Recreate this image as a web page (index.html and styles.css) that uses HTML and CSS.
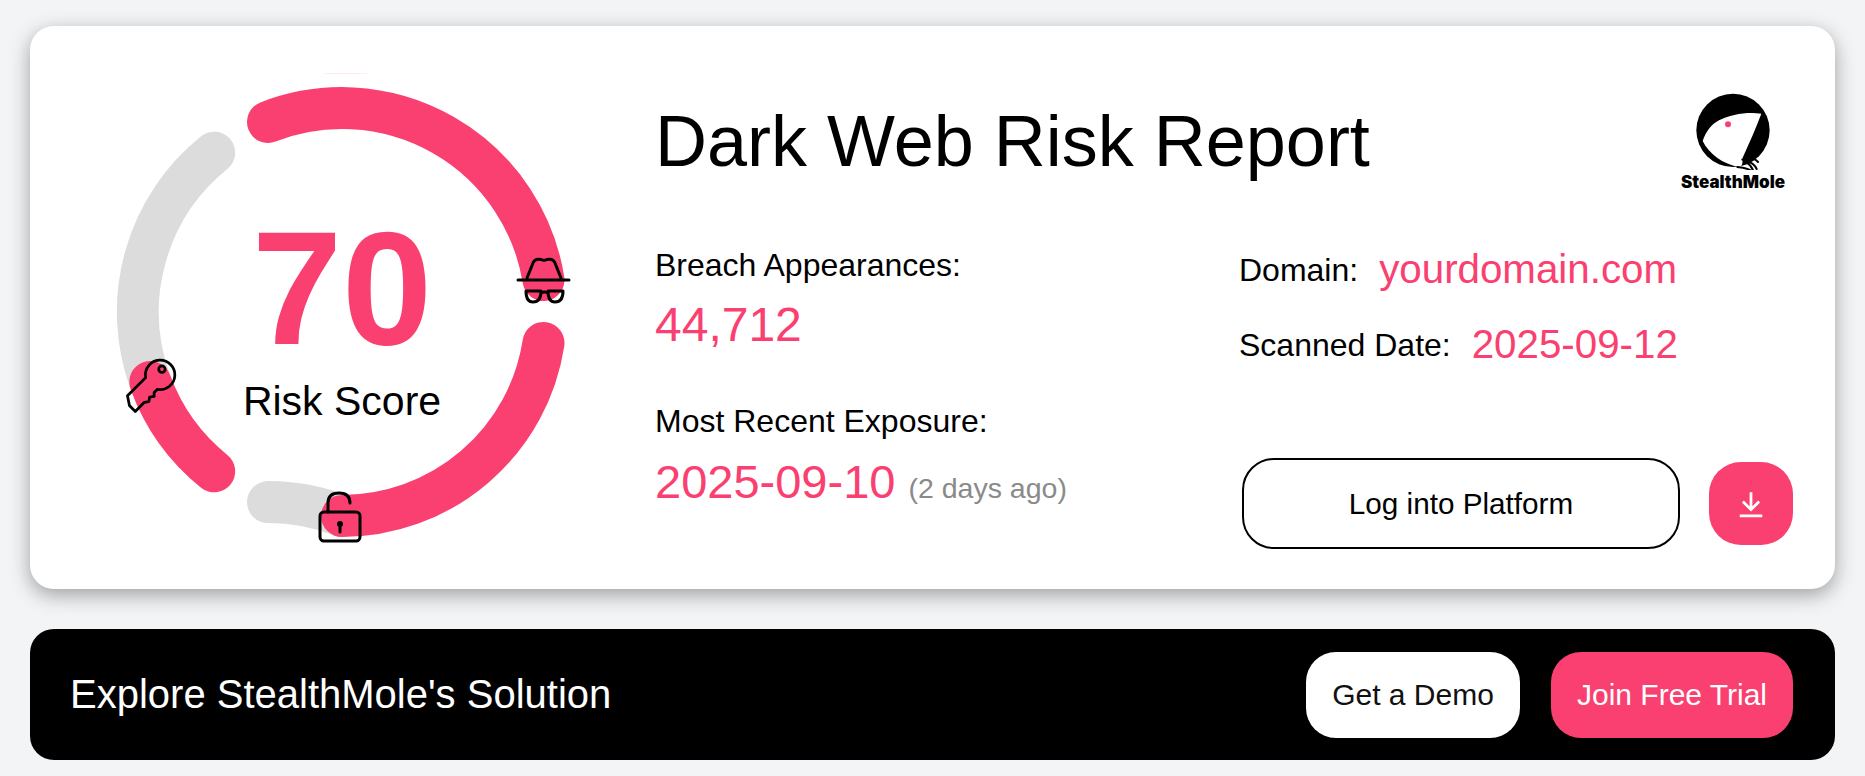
FILE: index.html
```html
<!DOCTYPE html>
<html lang="en">
<head>
<meta charset="utf-8">
<title>Dark Web Risk Report</title>
<link rel="stylesheet" href="styles.css">
</head>
<body>
<main class="page">
  <section class="card">
    <div class="gauge">
      <svg class="gauge-svg" viewBox="107 77 470 470" width="470" height="470" aria-hidden="true">
        <path class="arc-glint" d="M325 73.500H367"/>
        <g fill="none" stroke-width="42" stroke-linecap="round">
          <path class="arc-grey" d="M268 502.100A204 204 0 0 1 342 516"/>
          <path class="arc-grey" d="M214.200 152.700A204 204 0 0 0 150.300 382"/>
          <path class="arc-pink" d="M268 122A204 204 0 0 1 543.500 280"/>
          <path class="arc-pink" d="M543.500 343A204 204 0 0 1 342 516"/>
          <path class="arc-pink" d="M150.300 382A204 204 0 0 0 214.200 471.300"/>
        </g>
        <g class="icon-line">
          <path d="M518 280H569"/>
          <path d="M527 278L533 263Q535 258 541 259.500Q544 261 547 259.500Q553 258 555 263L561 278"/>
          <path d="M526 291H541Q541 302 533 302Q526 302 526 291ZM548 291H563Q563 302 555 302Q548 302 548 291ZM541 293Q544.500 291 548 293"/>
        </g>
        <g class="icon-line" transform="translate(160 375) rotate(-45) scale(0.92)">
          <path d="M-13 -9A16 16 0 1 1 -13 9L-18 9L-21 12L-25 9L-29 12L-33 9L-38 9L-47 9L-47 0L-41 -9Z"/>
          <circle cx="6" cy="-3" r="3.500"/>
        </g>
        <g class="icon-line">
          <rect x="320" y="512" width="40" height="29" rx="4"/>
          <path d="M328 512V503Q328 493 339 493Q350 493 350 503"/>
          <path d="M340 526V532"/>
          <circle class="icon-solid" cx="340" cy="524" r="3"/>
        </g>
      </svg>
      <div class="gauge-text">
        <div class="score">70</div>
        <div class="score-label">Risk Score</div>
      </div>
    </div>
    <div class="details">
      <header class="details-head">
        <h1 class="title">Dark Web Risk Report</h1>
        <div class="logo">
          <svg class="logo-mark" viewBox="160 65 234 234" width="78" height="78" aria-hidden="true">
            <circle cx="277" cy="180" r="110" class="logo-disc"/>
            <path class="logo-mole" d="M362 130C320 124 270 132 235 150C212 162 196 184 186 212C205 250 245 282 298 290C308 284 305 270 306 262C325 220 345 175 362 130Z"/>
            <circle class="logo-eye" cx="262" cy="162" r="9"/>
            <path class="logo-claw" d="M305 268Q335 255 352 275M318 272Q340 278 348 296M318 276Q332 285 338 302M290 290Q315 292 330 300"/>
          </svg>
          <span class="logo-name">StealthMole</span>
        </div>
      </header>
      <div class="details-body">
        <div class="stats">
          <div class="stat">
            <div class="label">Breach Appearances:</div>
            <div class="value">44,712</div>
          </div>
          <div class="stat">
            <div class="label">Most Recent Exposure:</div>
            <div class="value value-date">2025-09-10 <span class="note">(2 days ago)</span></div>
          </div>
        </div>
        <div class="side">
          <div class="meta">
            <div class="meta-row"><span class="label">Domain:</span><span class="meta-value">yourdomain.com</span></div>
            <div class="meta-row"><span class="label">Scanned Date:</span><span class="meta-value">2025-09-12</span></div>
          </div>
          <div class="actions">
            <button class="btn-outline" type="button">Log into Platform</button>
            <button class="btn-icon" type="button" aria-label="Download">
              <svg viewBox="0 0 24 24" width="30" height="30" aria-hidden="true">
                <path d="M12 2.500V16M5.500 10L12 16.500L18.500 10M3 21.500H21"/>
              </svg>
            </button>
          </div>
        </div>
      </div>
    </div>
  </section>
  <section class="cta">
    <div class="cta-text">Explore StealthMole's Solution</div>
    <div class="cta-actions">
      <button class="btn-white" type="button">Get a Demo</button>
      <button class="btn-pink" type="button">Join Free Trial</button>
    </div>
  </section>
</main>
</body>
</html>
```

FILE: styles.css
```css
* { box-sizing: border-box; }
html, body { margin: 0; height: 100%; }
body {
  background: #f3f4f6;
  font-family: "Liberation Sans", Arial, sans-serif;
  color: #000;
  overflow: hidden;
}
.page {
  display: flex;
  flex-direction: column;
  gap: 40px;
  padding: 26px 30px 16px;
}
.card {
  display: flex;
  height: 563px;
  padding: 51px 42px 40px 77px;
  background: #fff;
  border-radius: 24px;
  box-shadow: 0 6px 20px rgba(0, 0, 0, 0.35);
}
.gauge {
  display: grid;
  flex: none;
  width: 470px;
  height: 470px;
  margin-right: 78px;
}
.gauge-svg, .gauge-text { grid-area: 1 / 1; }
.gauge-svg { overflow: visible; }
.arc-glint { fill: none; stroke: #f94070; stroke-width: 1; opacity: 0.1; }
.arc-grey { stroke: #dcdcdc; }
.arc-pink { stroke: #f94070; }
.icon-line {
  fill: none;
  stroke: #000;
  stroke-width: 3;
  stroke-linecap: round;
  stroke-linejoin: round;
}
.icon-solid { fill: #000; stroke: none; }
.gauge-text {
  display: flex;
  flex-direction: column;
  align-items: center;
  justify-content: flex-start;
  padding-top: 131px;
}
.score {
  font-size: 162px;
  line-height: 160px;
  font-weight: 700;
  color: #f94070;
}
.score-label {
  margin-top: 10px;
  font-size: 41px;
  line-height: 46px;
}
.details {
  flex: 1;
  display: flex;
  flex-direction: column;
  min-width: 0;
}
.details-head {
  display: flex;
  justify-content: space-between;
  align-items: flex-start;
  height: 146px;
}
.title {
  margin: 24px 0 0;
  font-size: 72px;
  line-height: 80px;
  font-weight: 400;
}
.logo {
  display: flex;
  flex-direction: column;
  align-items: center;
  width: 106px;
  margin: 15px 7px 0 0;
}
.logo-disc { fill: #000; }
.logo-mole { fill: #fff; }
.logo-eye { fill: #f94070; }
.logo-claw { fill: none; stroke: #000; stroke-width: 6; stroke-linecap: round; }
.logo-name {
  margin-top: 2px;
  font-family: Inter, "Liberation Sans", sans-serif;
  font-size: 17px;
  line-height: 20px;
  font-weight: 900;
  white-space: nowrap;
}
.details-body {
  flex: 1;
  display: flex;
}
.stats {
  width: 585px;
  display: flex;
  flex-direction: column;
  gap: 50px;
  padding-top: 23px;
}
.label {
  font-size: 32px;
  line-height: 38px;
}
.value {
  margin-top: 14px;
  font-size: 48px;
  line-height: 54px;
  color: #f94070;
}
.value-date {
  margin-top: 15px;
  font-size: 47px;
}
.note {
  font-size: 28.500px;
  color: #8a8a8a;
}
.side {
  flex: 1;
  display: flex;
  flex-direction: column;
  padding-top: 24px;
}
.meta {
  display: flex;
  flex-direction: column;
  gap: 29px;
}
.meta-row {
  display: flex;
  align-items: center;
  gap: 21px;
  height: 46px;
}
.meta-value {
  font-size: 40.300px;
  color: #f94070;
}
.actions {
  display: flex;
  align-items: center;
  gap: 29px;
  margin-top: auto;
  margin-left: 3px;
}
button {
  font-family: inherit;
  border: 0;
  padding: 0;
  cursor: pointer;
}
.btn-outline {
  width: 438px;
  height: 91px;
  background: #fff;
  border: 2px solid #000;
  border-radius: 32px;
  font-size: 29.700px;
  color: #000;
}
.btn-icon {
  display: flex;
  align-items: center;
  justify-content: center;
  width: 84px;
  height: 83px;
  background: #f94070;
  border-radius: 32px;
}
.btn-icon path {
  fill: none;
  stroke: #fff;
  stroke-width: 2.200;
}
.cta {
  display: flex;
  align-items: center;
  justify-content: space-between;
  height: 131px;
  padding: 0 42px 0 40px;
  background: #000;
  border-radius: 24px;
}
.cta-text {
  font-size: 40px;
  color: #fff;
}
.cta-actions {
  display: flex;
  gap: 31px;
}
.btn-white, .btn-pink {
  height: 86px;
  border-radius: 30px;
  font-size: 30px;
}
.btn-white {
  width: 214px;
  background: #fff;
  color: #111;
}
.btn-pink {
  width: 242px;
  background: #f94070;
  color: #fff;
}
```
